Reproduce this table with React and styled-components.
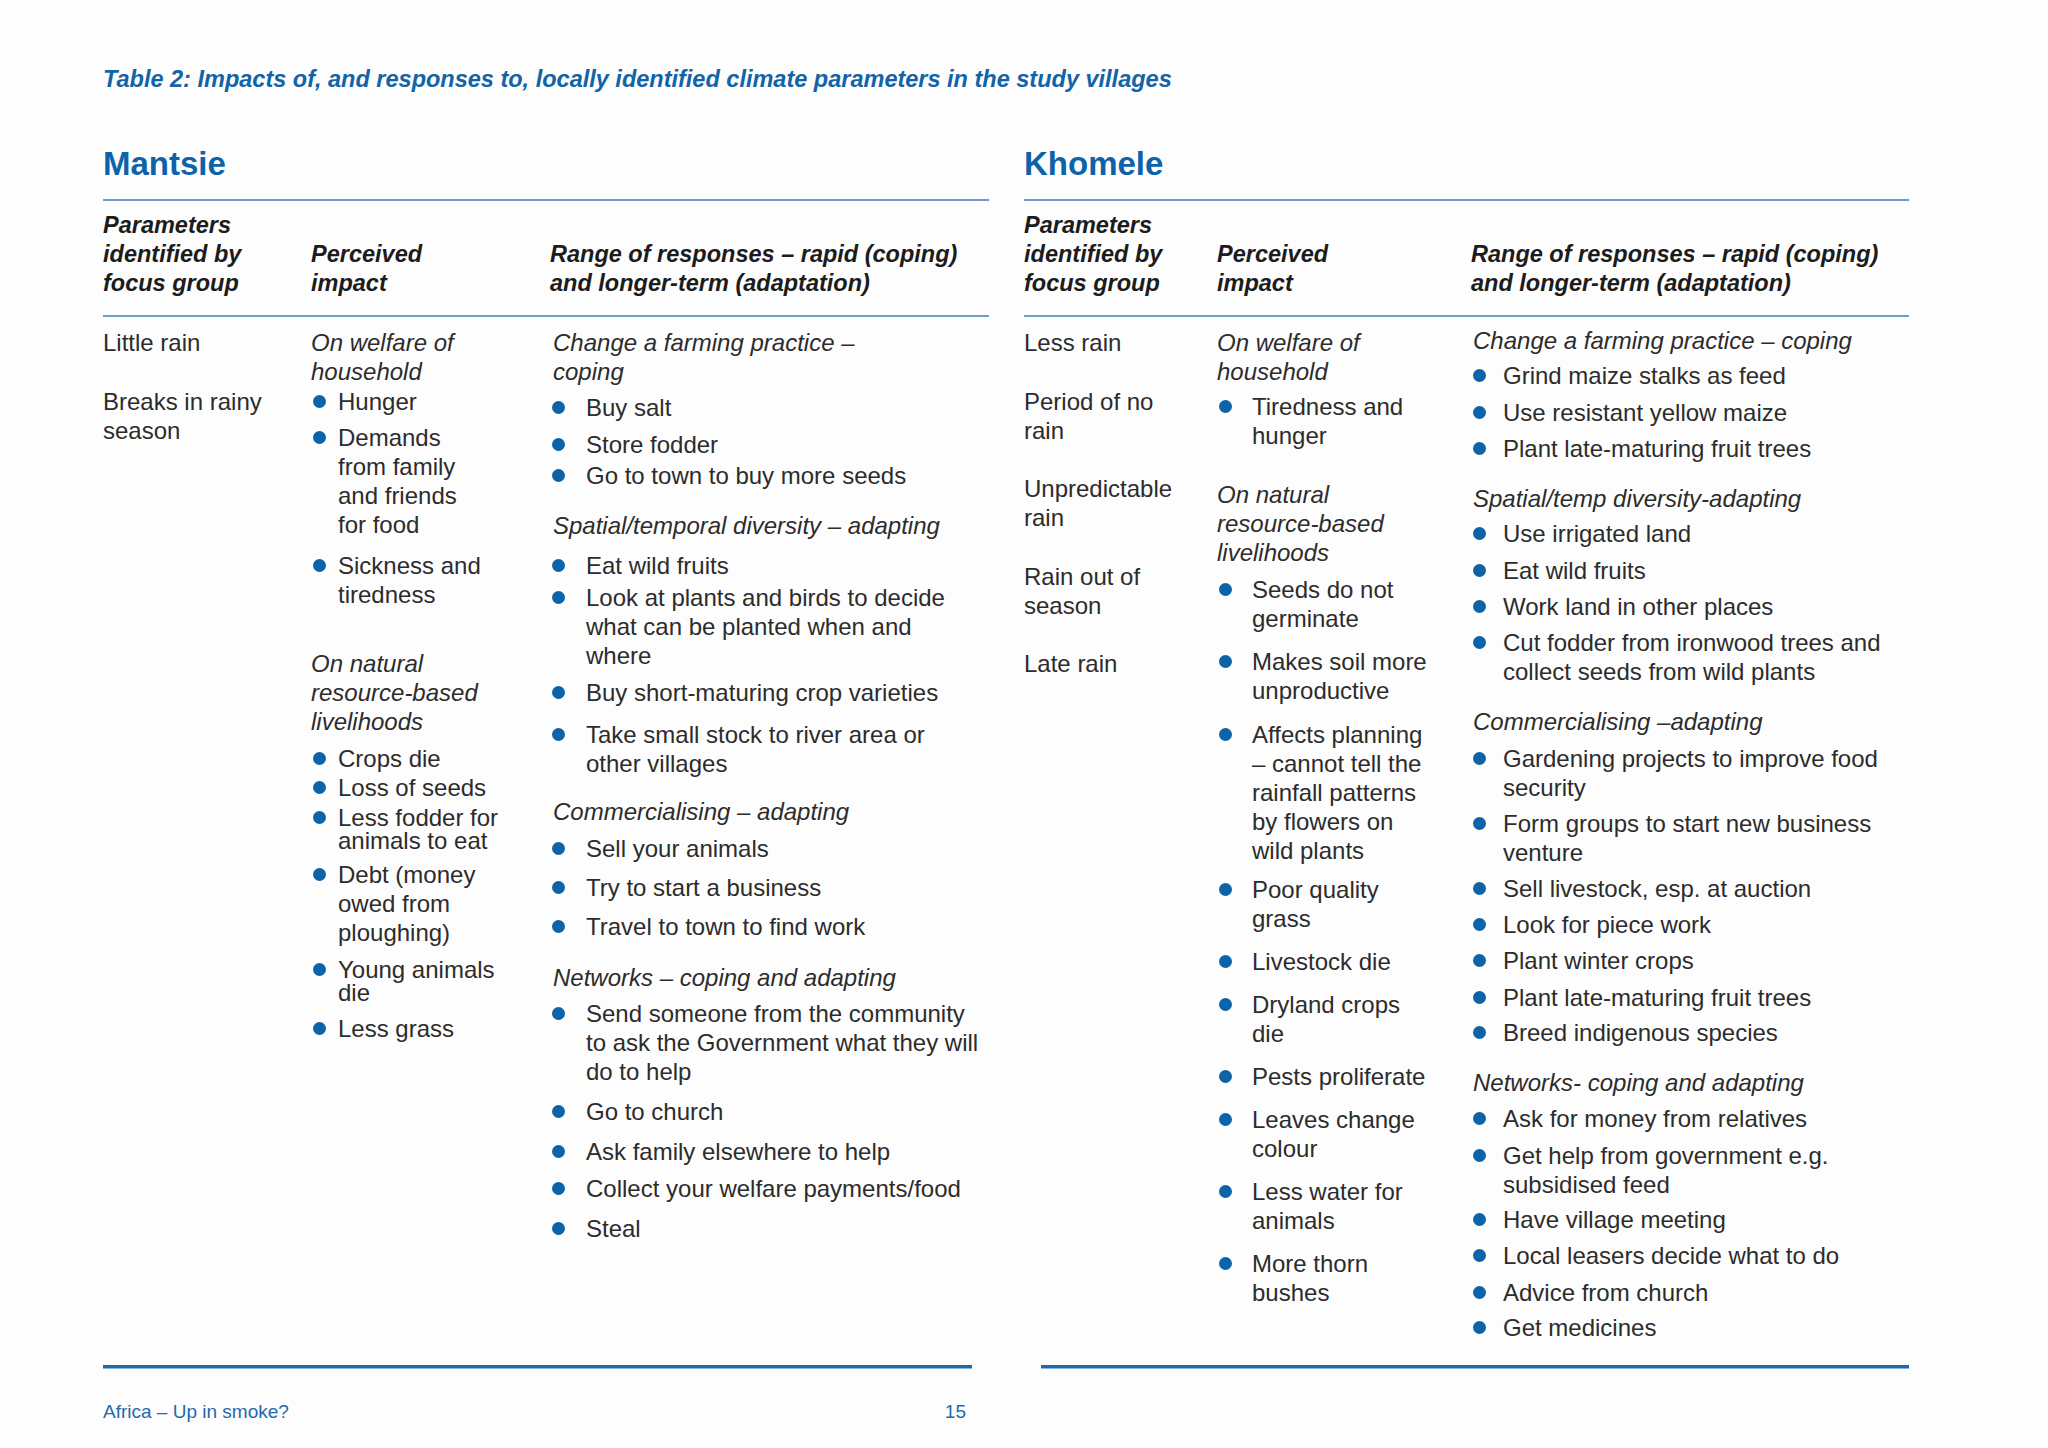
import React from "react";
import styled, { createGlobalStyle } from "styled-components";

const GlobalStyle = createGlobalStyle`
  html, body {
    margin: 0;
    padding: 0;
    background: #fdfdfd;
  }
  body {
    font-family: "Liberation Sans", Arial, sans-serif;
    color: #2c2c2c;
  }
`;

// each column: list of blocks. h = italic sub heading, b = bullet item, p = plain text
const villages = [
  {
    name: "Mantsie",
    cols: "208px 239px 1fr",
    indents: [0, 27, 36],
    headPad: [0, 0, 3],
    columns: [
      [
        { k: "p", lines: ["Little rain"], s: 0 },
        { k: "p", lines: ["Breaks in rainy", "season"], s: 30 },
      ],
      [
        { k: "h", lines: ["On welfare of", "household"], s: 0 },
        { k: "b", lines: ["Hunger"], s: 1 },
        { k: "b", lines: ["Demands", "from family", "and friends", "for food"], s: 7 },
        { k: "b", lines: ["Sickness and", "tiredness"], s: 12 },
        { k: "h", lines: ["On natural", "resource-based", "livelihoods"], s: 40 },
        { k: "b", lines: ["Crops die"], s: 8 },
        { k: "b", lines: ["Loss of seeds"], s: 0 },
        { k: "b", lines: ["Less fodder for", "animals to eat"], s: 4, lh: 23 },
        { k: "b", lines: ["Debt (money", "owed from", "ploughing)"], s: 8 },
        { k: "b", lines: ["Young animals", "die"], s: 11, lh: 23 },
        { k: "b", lines: ["Less grass"], s: 10 },
      ],
      [
        { k: "h", lines: ["Change a farming practice –", "coping"], s: 0 },
        { k: "b", lines: ["Buy salt"], s: 7 },
        { k: "b", lines: ["Store fodder"], s: 8 },
        { k: "b", lines: ["Go to town to buy more seeds"], s: 2 },
        { k: "h", lines: ["Spatial/temporal diversity – adapting"], s: 21 },
        { k: "b", lines: ["Eat wild fruits"], s: 11 },
        {
          k: "b",
          lines: ["Look at plants and birds to decide", "what can be planted when and", "where"],
          s: 3,
        },
        { k: "b", lines: ["Buy short-maturing crop varieties"], s: 8 },
        { k: "b", lines: ["Take small stock to river area or", "other villages"], s: 13 },
        { k: "h", lines: ["Commercialising – adapting"], s: 19 },
        { k: "b", lines: ["Sell your animals"], s: 8 },
        { k: "b", lines: ["Try to start a business"], s: 10 },
        { k: "b", lines: ["Travel to town to find work"], s: 10 },
        { k: "h", lines: ["Networks – coping and adapting"], s: 22 },
        {
          k: "b",
          lines: ["Send someone from the community", "to ask the Government what they will", "do to help"],
          s: 7,
        },
        { k: "b", lines: ["Go to church"], s: 11 },
        { k: "b", lines: ["Ask family elsewhere to help"], s: 11 },
        { k: "b", lines: ["Collect your welfare payments/food"], s: 8 },
        { k: "b", lines: ["Steal"], s: 11 },
      ],
    ],
  },
  {
    name: "Khomele",
    cols: "193px 254px 1fr",
    indents: [0, 35, 32],
    headPad: [0, 0, 2],
    columns: [
      [
        { k: "p", lines: ["Less rain"], s: 0 },
        { k: "p", lines: ["Period of no", "rain"], s: 29.5 },
        { k: "p", lines: ["Unpredictable", "rain"], s: 29.5 },
        { k: "p", lines: ["Rain out of", "season"], s: 29.5 },
        { k: "p", lines: ["Late rain"], s: 29.5 },
      ],
      [
        { k: "h", lines: ["On welfare of", "household"], s: 0 },
        { k: "b", lines: ["Tiredness and", "hunger"], s: 6 },
        { k: "h", lines: ["On natural", "resource-based", "livelihoods"], s: 30 },
        { k: "b", lines: ["Seeds do not", "germinate"], s: 8 },
        { k: "b", lines: ["Makes soil more", "unproductive"], s: 14 },
        {
          k: "b",
          lines: ["Affects planning", "– cannot tell the", "rainfall patterns", "by flowers on", "wild plants"],
          s: 15,
        },
        { k: "b", lines: ["Poor quality", "grass"], s: 10 },
        { k: "b", lines: ["Livestock die"], s: 14 },
        { k: "b", lines: ["Dryland crops", "die"], s: 14 },
        { k: "b", lines: ["Pests proliferate"], s: 14 },
        { k: "b", lines: ["Leaves change", "colour"], s: 14 },
        { k: "b", lines: ["Less water for", "animals"], s: 14 },
        { k: "b", lines: ["More thorn", "bushes"], s: 14 },
      ],
      [
        { k: "h", lines: ["Change a farming practice – coping"], s: -2 },
        { k: "b", lines: ["Grind maize stalks as feed"], s: 6 },
        { k: "b", lines: ["Use resistant yellow maize"], s: 8 },
        { k: "b", lines: ["Plant late-maturing fruit trees"], s: 7 },
        { k: "h", lines: ["Spatial/temp diversity-adapting"], s: 21 },
        { k: "b", lines: ["Use irrigated land"], s: 6 },
        { k: "b", lines: ["Eat wild fruits"], s: 8 },
        { k: "b", lines: ["Work land in other places"], s: 7 },
        { k: "b", lines: ["Cut fodder from ironwood trees and", "collect seeds from wild plants"], s: 7 },
        { k: "h", lines: ["Commercialising –adapting"], s: 21 },
        { k: "b", lines: ["Gardening projects to improve food", "security"], s: 8 },
        { k: "b", lines: ["Form groups to start new business", "venture"], s: 7 },
        { k: "b", lines: ["Sell livestock, esp. at auction"], s: 7 },
        { k: "b", lines: ["Look for piece work"], s: 7 },
        { k: "b", lines: ["Plant winter crops"], s: 7 },
        { k: "b", lines: ["Plant late-maturing fruit trees"], s: 8 },
        { k: "b", lines: ["Breed indigenous species"], s: 6 },
        { k: "h", lines: ["Networks- coping and adapting"], s: 21 },
        { k: "b", lines: ["Ask for money from relatives"], s: 7 },
        { k: "b", lines: ["Get help from government e.g.", "subsidised feed"], s: 8 },
        { k: "b", lines: ["Have village meeting"], s: 6 },
        { k: "b", lines: ["Local leasers decide what to do"], s: 7 },
        { k: "b", lines: ["Advice from church"], s: 8 },
        { k: "b", lines: ["Get medicines"], s: 6 },
      ],
    ],
  },
];

const headers = [
  ["Parameters", "identified by", "focus group"],
  ["Perceived", "impact"],
  ["Range of responses – rapid (coping)", "and longer-term (adaptation)"],
];

function App() {
  return (
    <>
      <GlobalStyle />
      <Page>
        <Title>
          Table 2: Impacts of, and responses to, locally identified climate parameters in the study villages
        </Title>

        <Panels>
          {villages.map((v) => (
            <Panel key={v.name}>
              <VillageName>{v.name}</VillageName>
              <Rule />
              <HeaderGrid $cols={v.cols}>
                {headers.map((h, i) => (
                  <div key={i}>
                    {h.map((line) => (
                      <HeaderLine key={line}>{line}</HeaderLine>
                    ))}
                  </div>
                ))}
              </HeaderGrid>
              <Rule />
              <BodyGrid $cols={v.cols}>
                {v.columns.map((col, ci) => (
                  <Column key={ci}>
                    {col.map((blk, bi) => {
                      if (blk.k === "b") {
                        return (
                          <Item key={bi} $space={blk.s} $indent={v.indents[ci]}>
                            <Dot $lh={blk.lh || 29} />
                            <div>
                              {blk.lines.map((l) => (
                                <Line key={l} $lh={blk.lh}>
                                  {l}
                                </Line>
                              ))}
                            </div>
                          </Item>
                        );
                      }
                      if (blk.k === "h") {
                        return (
                          <SubHeading key={bi} $space={blk.s} $pad={v.headPad[ci]}>
                            {blk.lines.map((l) => (
                              <Line key={l}>{l}</Line>
                            ))}
                          </SubHeading>
                        );
                      }
                      return (
                        <Plain key={bi} $space={blk.s}>
                          {blk.lines.map((l) => (
                            <Line key={l}>{l}</Line>
                          ))}
                        </Plain>
                      );
                    })}
                  </Column>
                ))}
              </BodyGrid>
            </Panel>
          ))}
        </Panels>

        <BottomRules>
          <BottomRule $w={869} />
          <BottomRule $w={868} />
        </BottomRules>

        <Footer>
          <span>Africa – Up in smoke?</span>
          <span>15</span>
        </Footer>
      </Page>
    </>
  );
}

export default App;

const Page = styled.div`
  width: 2048px;
  height: 1448px;
  box-sizing: border-box;
  padding: 64px 0 0 103px;
  overflow: hidden;
`;

const Title = styled.h1`
  margin: 0;
  font-size: 23.5px;
  line-height: 30px;
  font-weight: bold;
  font-style: italic;
  color: #1264a7;
`;

const Panels = styled.div`
  display: grid;
  grid-template-columns: 886px 885px;
  column-gap: 35px;
  height: 1221px;
  margin-top: 50px;
`;

const Panel = styled.section`
  display: flex;
  flex-direction: column;
`;

const VillageName = styled.h2`
  margin: 0 0 15px;
  font-size: 33px;
  line-height: 40px;
  font-weight: bold;
  color: #0d63a9;
`;

const Rule = styled.div`
  height: 2px;
  background: #6f9ccb;
`;

const HeaderGrid = styled.div`
  display: grid;
  grid-template-columns: ${(p) => p.$cols};
  align-items: end;
  padding: 10px 0 17px;
`;

const HeaderLine = styled.div`
  font-size: 23.5px;
  line-height: 29px;
  font-weight: bold;
  font-style: italic;
  color: #1c1c1c;
  white-space: nowrap;
`;

const BodyGrid = styled.div`
  display: grid;
  grid-template-columns: ${(p) => p.$cols};
  align-items: start;
  padding-top: 11px;
`;

const Column = styled.div`
  display: flex;
  flex-direction: column;
`;

const Line = styled.div`
  font-size: 24px;
  line-height: ${(p) => p.$lh || 29}px;
  white-space: nowrap;
`;

const Plain = styled.div`
  margin-top: ${(p) => p.$space}px;
`;

const SubHeading = styled.div`
  margin-top: ${(p) => p.$space}px;
  padding-left: ${(p) => p.$pad}px;
  font-style: italic;
`;

const Item = styled.div`
  display: flex;
  align-items: flex-start;
  margin-top: ${(p) => p.$space}px;
  padding-left: 2px;

  & > div:last-child {
    margin-left: ${(p) => p.$indent - 15}px;
  }
`;

const Dot = styled.span`
  flex: none;
  width: 13px;
  height: 13px;
  margin-top: ${(p) => (p.$lh - 13) / 2}px;
  border-radius: 50%;
  background: #0d63a8;
`;

const BottomRules = styled.div`
  display: flex;
  gap: 69px;
`;

const BottomRule = styled.div`
  width: ${(p) => p.$w}px;
  height: 3px;
  background: #1e69ab;
  box-shadow: 0 1px 0 #8fb4da;
`;

const Footer = styled.div`
  display: flex;
  justify-content: space-between;
  width: 863px;
  margin-top: 32px;
  font-size: 19px;
  line-height: 23px;
  color: #1f6aae;
`;
